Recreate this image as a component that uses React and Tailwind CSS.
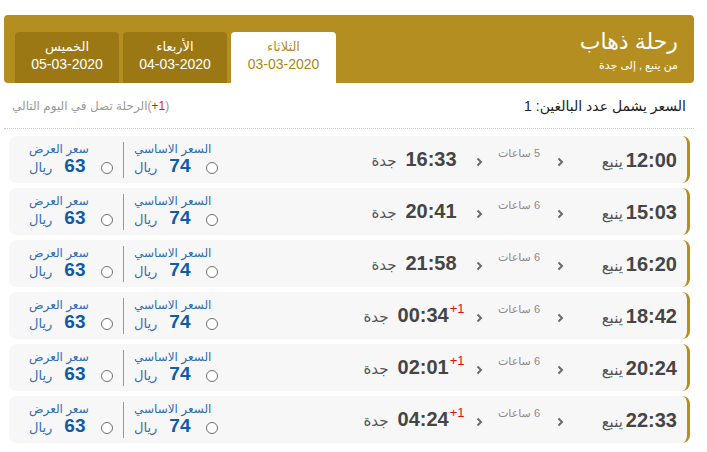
import React from "react";

const rows = [
  { dep: "12:00", arr: "16:33", dur: "5 ساعات", plus: false },
  { dep: "15:03", arr: "20:41", dur: "6 ساعات", plus: false },
  { dep: "16:20", arr: "21:58", dur: "6 ساعات", plus: false },
  { dep: "18:42", arr: "00:34", dur: "6 ساعات", plus: true },
  { dep: "20:24", arr: "02:01", dur: "6 ساعات", plus: true },
  { dep: "22:33", arr: "04:24", dur: "6 ساعات", plus: true },
];

function Chevron() {
  return (
    <svg width="7" height="10" viewBox="0 0 7 10">
      <polyline points="1.5,1.5 5,5 1.5,8.5" fill="none" stroke="#6b6b6b" strokeWidth="2" />
    </svg>
  );
}

function Radio() {
  return <div className="mt-[17px] h-[12px] w-[12px] shrink-0 rounded-full border border-[#6f6f6f] bg-white" />;
}

function Price({ label, value, w }) {
  return (
    <div className={`flex ${w} shrink-0 flex-col items-end`}>
      <div className="whitespace-nowrap text-[12px] leading-[14px] text-[#2f6db3]">{label}</div>
      <div className="flex items-baseline gap-[12px] leading-[20px]">
        <span className="text-[19px] font-bold text-[#0f5ba6]">{value}</span>
        <span className="text-[13px] text-[#2f6db3]">ريال</span>
      </div>
    </div>
  );
}

function Row({ r }) {
  return (
    <div className="ml-[9px] mr-[17px] flex h-[47px] items-center rounded-[8px] border-r-[3px] border-[#b58e21] bg-[#f7f7f7] pr-[10px] pl-[20px]">
      <div className="flex w-[107px] shrink-0 items-baseline gap-[3px]">
        <span className="text-[20px] font-bold text-[#454545]">{r.dep}</span>
        <span className="text-[15px] text-[#555]">ينبع</span>
      </div>
      <div className="flex w-[20px] shrink-0 justify-center pt-[4px]">
        <Chevron />
      </div>
      <div className="mb-[12px] flex w-[62px] shrink-0 justify-center whitespace-nowrap text-[11px] text-[#8a8a8a]">
        {r.dur}
      </div>
      <div className="flex w-[18px] shrink-0 justify-center pt-[4px]">
        <Chevron />
      </div>
      <div dir="ltr" className="flex w-[112px] shrink-0 items-baseline justify-center gap-[9px] whitespace-nowrap leading-[24px]">
        <span className="text-[15px] text-[#555]">جدة</span>
        <span dir="ltr" className="whitespace-nowrap">
          <span className="text-[20px] font-bold text-[#454545]">{r.arr}</span>
          {r.plus && <span className="ml-[1px] align-[9px] text-[13px] leading-[14px] text-[#e8100b]">+1</span>}
        </span>
      </div>
      <div className="flex-1" />
      <div className="flex items-center">
        <Radio />
        <div className="w-[1px]" />
        <Price label="السعر الاساسي" value="74" w="w-[71px]" />
        <div className="mx-[10px] h-[36px] w-px bg-[#9a9a9a]" />
        <Radio />
        <div className="w-[16px]" />
        <Price label="سعر العرض" value="63" w="w-[56px]" />
      </div>
    </div>
  );
}

export default function App() {
  return (
    <div
      dir="rtl"
      className="min-h-[452px] bg-white"
      style={{ fontFamily: '"Liberation Sans", "DejaVu Sans", sans-serif' }}
    >
      <div className="ml-[4px] mr-[13px] pt-[15px]">
        <div className="flex h-[68px] justify-between rounded-[4px] bg-[#b58e21] pl-[11px] pr-[16px]">
          <div className="pt-[14px] text-white">
            <div className="text-[22px] leading-[26px]">رحلة ذهاب</div>
            <div className="mt-[3px] text-[11px] leading-[14px]">من ينبع , إلى جدة</div>
          </div>
          <div className="flex items-end gap-[4px]">
            <div className="flex h-[51px] w-[105px] flex-col items-center rounded-t-[4px] bg-white pt-[7px]">
              <div className="text-[13px] leading-[16px] text-[#b58e21]">الثلاثاء</div>
              <div className="text-[14px] leading-[18px] text-[#a98720]">03-03-2020</div>
            </div>
            <div className="flex h-[51px] w-[104px] flex-col items-center rounded-t-[4px] bg-[#9c7815] pt-[7px] text-white">
              <div className="text-[13px] leading-[16px]">الأربعاء</div>
              <div className="text-[14px] leading-[18px]">04-03-2020</div>
            </div>
            <div className="flex h-[51px] w-[104px] flex-col items-center rounded-t-[4px] bg-[#9c7815] pt-[7px] text-white">
              <div className="text-[13px] leading-[16px]">الخميس</div>
              <div className="text-[14px] leading-[18px]">05-03-2020</div>
            </div>
          </div>
        </div>
        <div className="mt-[13px] flex items-center justify-between border-b border-dotted border-[#c8c8c8] pb-[12px] pl-[8px] pr-[8px]">
          <div className="text-[14px] leading-[20px] text-[#222]">السعر يشمل عدد البالغين: 1</div>
          <div className="text-[12px] leading-[20px] text-[#9a9a9a]">
            <span dir="ltr" className="inline-block">(<span className="text-[#e8100b]">+1</span>)</span>الرحلة تصل في اليوم التالي
          </div>
        </div>
      </div>
      <div className="mt-[7px] flex flex-col gap-[5px]">
        {rows.map((r, i) => (
          <Row key={i} r={r} />
        ))}
      </div>
    </div>
  );
}
